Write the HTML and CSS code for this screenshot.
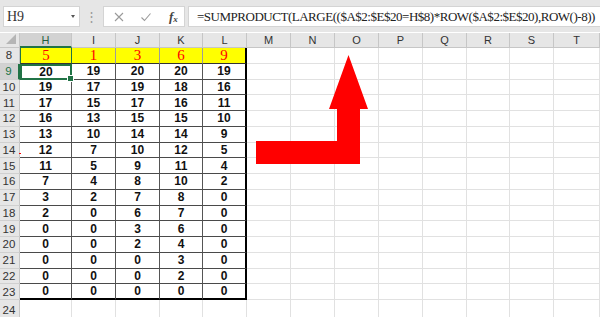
FILE: index.html
```html
<!DOCTYPE html>
<html>
<head>
<meta charset="utf-8">
<link rel="stylesheet" href="styles.css">
</head>
<body>
<div class="app">
  <div class="toolbar">
    <div class="namebox"><span class="ref">H9</span><span class="caret"></span></div>
    <div class="dots">⋮</div>
    <div class="fnbox">
      <svg class="ico" width="12" height="12" viewBox="0 0 12 12"><path d="M2 2L10 10M10 2L2 10" stroke="#9a9a9a" stroke-width="1.1" fill="none"/></svg>
      <svg class="ico" width="12" height="12" viewBox="0 0 12 12"><path d="M1.5 6.5L4.5 9.5L10.5 2.5" stroke="#9a9a9a" stroke-width="1.1" fill="none"/></svg>
      <span class="fx"><i>f</i><sub>x</sub></span>
    </div>
    <div class="formula">=SUMPRODUCT(LARGE(($A$2:$E$20=H$8)*ROW($A$2:$E$20),ROW()-8))</div>
  </div>
  <div class="sheet" id="sheet"></div>
  <span class="mark"></span>
  <svg class="arrow" width="600" height="317" viewBox="0 0 600 317"><polygon points="256,141 337,141 337,109 329,109 348.5,55 368,109 360,109 360,164 256,164" fill="#ff0000"/></svg>
</div>
<script src="app.js"></script>
</body>
</html>
```
FILE: styles.css
```css
html, body { margin: 0; padding: 0; background: #fff; }
.app { position: relative; width: 600px; height: 317px; overflow: hidden; font-family: "Liberation Sans", Arial, sans-serif; }
.toolbar { height: 32px; background: #e6e6e6; display: flex; align-items: flex-start; padding-top: 6px; box-sizing: border-box; }
.namebox { margin-left: 3px; width: 77px; height: 21px; background: #fff; border: 1px solid #d4d4d4; box-sizing: border-box; display: flex; align-items: center; justify-content: space-between; padding: 0 4px 0 3px; }
.ref { font-family: "Liberation Serif", "Times New Roman", serif; font-size: 14px; color: #333; }
.caret { width: 0; height: 0; border-left: 2.5px solid transparent; border-right: 2.5px solid transparent; border-top: 3px solid #555; }
.dots { width: 23px; text-align: center; color: #9a9a9a; font-size: 13px; line-height: 21px; }
.fnbox { width: 82px; height: 21px; background: #fff; border: 1px solid #d4d4d4; box-sizing: border-box; display: flex; align-items: center; gap: 15px; padding-left: 9px; }
.ico { display: block; }
.fx { font-family: "Liberation Serif", serif; font-size: 13px; color: #444; font-weight: bold; margin-left: 2px; }
.fx i { font-style: italic; }
.fx sub { font-size: 9px; font-style: italic; vertical-align: -1px; }
.formula { margin-left: 3px; flex: 1; height: 21px; background: #fff; border: 1px solid #d4d4d4; border-right: none; box-sizing: border-box; font-family: "Liberation Serif", "Times New Roman", serif; font-size: 13px; color: #222; padding-left: 8px; line-height: 19px; white-space: nowrap; letter-spacing: -0.48px; }
.sheet { margin-top: 1px; display: grid; grid-template-columns: 20px 52px 44px 44px 43px 44px 44px 44px 44px 44px 44px 43px 44px 46px; grid-template-rows: 15px repeat(16, 15.75px) 20px; }
.c { border-right: 1px solid #e1e1e1; border-bottom: 1px solid #e1e1e1; box-sizing: border-box; display: flex; align-items: center; justify-content: center; font-size: 11.5px; }
.ch { background: #e6e6e6; border-right: 1px solid #c6c6c6; border-bottom: 1px solid #c6c6c6; color: #333; font-size: 11px; }
.ch.sel { background: #d2d2d2; color: #1f5f3c; border-bottom: 2px solid #217346; }
.corner { position: relative; }
.corner::after { content: ""; position: absolute; right: 3px; bottom: 3px; border-left: 10px solid transparent; border-bottom: 10px solid #b5b5b5; }
.rh { background: #e6e6e6; border-right: 1px solid #c6c6c6; border-bottom: 1px solid #d0d0d0; color: #333; font-size: 11.5px; justify-content: center; padding-right: 1px; }
.rh.sel { background: #d2d2d2; color: #217346; border-right: 2px solid #217346; }
.y { background: #ffff00; color: #ff0000; font-family: "Liberation Serif", "Times New Roman", serif; font-size: 15px; border-right: 1px solid #9c9c9c; border-bottom: 1px solid #333; }
.d { font-weight: bold; color: #111; font-size: 12px; border-right: 1.5px solid #555; border-bottom: 1.5px solid #4a4a4a; }
.last { border-right: 2px solid #000; }
.bot { border-bottom: 2px solid #000; }
.h8 { border-left: 1px solid #217346; border-right: 1px solid #217346; }
.h9 { border: 2px solid #217346; position: relative; }
.h9::after { content: ""; position: absolute; right: -4px; bottom: -4px; width: 5px; height: 5px; background: #217346; border: 1px solid #fff; }
.mark { position: absolute; left: 19px; top: 153px; width: 2px; height: 1px; background: #ff0000; }
.arrow { position: absolute; left: 0; top: 0; pointer-events: none; }
```
FILE: app.js
```js
var cols = ["H","I","J","K","L","M","N","O","P","Q","R","S","T"];
var head = [5,1,3,6,9];
var data = [
[20,19,20,20,19],[19,17,19,18,16],[17,15,17,16,11],[16,13,15,15,10],[13,10,14,14,9],
[12,7,10,12,5],[11,5,9,11,4],[7,4,8,10,2],[3,2,7,8,0],[2,0,6,7,0],
[0,0,3,6,0],[0,0,2,4,0],[0,0,0,3,0],[0,0,0,2,0],[0,0,0,0,0]];
var s = document.getElementById("sheet");
function cell(cls, txt) { var d = document.createElement("div"); d.className = "c " + cls; d.textContent = txt; s.appendChild(d); return d; }
cell("ch corner", "");
cols.forEach(function (c, i) { cell("ch" + (i === 0 ? " sel" : ""), c); });
for (var r = 8; r <= 24; r++) {
  cell("rh" + (r === 9 ? " sel" : ""), r);
  for (var j = 0; j < cols.length; j++) {
    if (j < 5 && r === 8) {
      cell("y" + (j === 4 ? " last" : "") + (j === 0 ? " h8" : ""), head[j]);
    } else if (j < 5 && r <= 23) {
      var cls = "d" + (j === 4 ? " last" : "") + (r === 23 ? " bot" : "") + (r === 9 && j === 0 ? " h9" : "");
      cell(cls, data[r - 9][j]);
    } else {
      cell("", "");
    }
  }
}
```
